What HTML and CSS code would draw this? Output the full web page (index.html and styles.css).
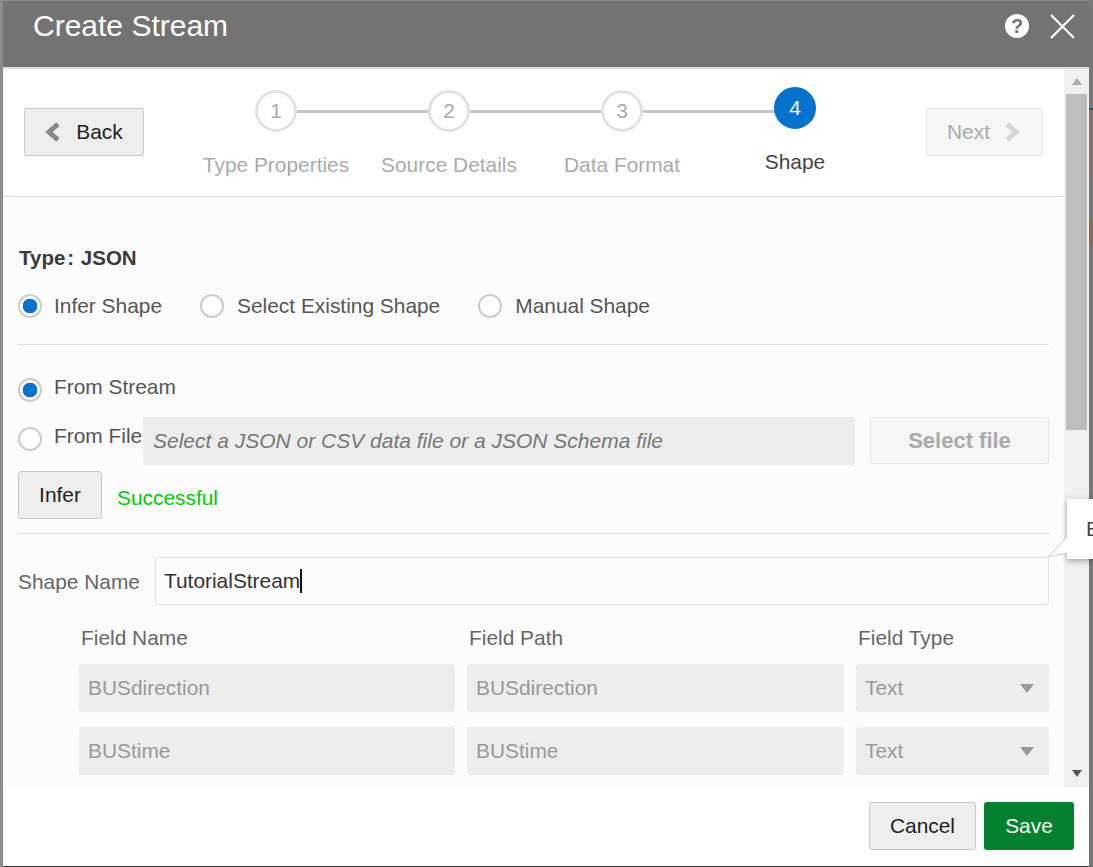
FILE: index.html
```html
<!DOCTYPE html>
<html lang="en">
<head>
  <meta charset="utf-8">
  <title>Create Stream</title>
  <link rel="stylesheet" href="styles.css">
</head>
<body>

<div class="modal">
  <header class="modal-head">
    <h1>Create Stream</h1>
    <svg class="help" width="26" height="26" viewBox="0 0 26 26"><circle cx="13" cy="13" r="12" fill="#fff"/><text x="13" y="19.5" text-anchor="middle" class="help-mark">?</text></svg>
    <svg class="close" width="26" height="26" viewBox="0 0 26 26"><path d="M2 2 L25 25 M25 2 L2 25" stroke="#fff" stroke-width="2.2" fill="none"/></svg>
  </header>

  <div class="modal-middle">
    <main class="content">
      <section class="wizard">
        <button class="btn btn-back">
          <svg width="16" height="20" viewBox="0 0 16 20"><path d="M13 2 L4 10 L13 18" stroke="#888" stroke-width="5" fill="none"/></svg>
          Back
        </button>
        <ol class="train">
          <li class="step"><span class="dot">1</span><span class="step-label">Type Properties</span></li>
          <li class="step"><span class="dot">2</span><span class="step-label">Source Details</span></li>
          <li class="step"><span class="dot">3</span><span class="step-label">Data Format</span></li>
          <li class="step current"><span class="dot">4</span><span class="step-label">Shape</span></li>
        </ol>
        <button class="btn btn-next">
          Next
          <svg width="16" height="20" viewBox="0 0 16 20"><path d="M3 2 L12 10 L3 18" stroke="#d6d6d6" stroke-width="5" fill="none"/></svg>
        </button>
      </section>

      <section class="form">
        <div class="type-line">Type<span class="colon">:</span> JSON</div>

        <div class="mode-row">
          <label class="choice"><input type="radio" name="mode" checked> Infer Shape</label>
          <label class="choice"><input type="radio" name="mode"> Select Existing Shape</label>
          <label class="choice"><input type="radio" name="mode"> Manual Shape</label>
        </div>

        <hr class="rule rule-a">

        <label class="choice source-stream"><input type="radio" name="src" checked> <span class="raised">From Stream</span></label>

        <div class="file-row">
          <label class="choice"><input type="radio" name="src"> <span class="raised">From File</span></label>
          <div class="box file-box">Select a JSON or CSV data file or a JSON Schema file</div>
          <button class="btn-select">Select file</button>
        </div>

        <div class="infer-row">
          <button class="btn btn-infer">Infer</button>
          <span class="ok">Successful</span>
        </div>

        <hr class="rule rule-b">

        <div class="name-row">
          <label class="name-label">Shape Name</label>
          <div class="box name-box">TutorialStream<span class="caret"></span></div>
        </div>

        <div class="fields">
          <div class="col-head">Field Name</div>
          <div class="col-head">Field Path</div>
          <div class="col-head">Field Type</div>

          <div class="box cell">BUSdirection</div>
          <div class="box cell">BUSdirection</div>
          <div class="box cell cell-select">Text<i class="arrow"></i></div>

          <div class="box cell">BUStime</div>
          <div class="box cell">BUStime</div>
          <div class="box cell cell-select">Text<i class="arrow"></i></div>
        </div>
      </section>
    </main>

    <div class="scrollbar">
      <i class="sb-up"></i>
      <div class="sb-thumb"></div>
      <i class="sb-down"></i>
    </div>
  </div>

  <footer class="modal-foot">
    <button class="btn btn-cancel">Cancel</button>
    <button class="btn-save">Save</button>
  </footer>

  <div class="tip">
    <svg class="tip-tail" width="22" height="24" viewBox="0 0 22 24"><path d="M20 1 L1 21 L20 17" fill="#fff" stroke="#d0d0d0"/><path d="M20 0 L21 0 L21 17 L20 17 Z" fill="#fff"/></svg>
    E
  </div>
</div>

</body>
</html>
```

FILE: styles.css
```css
:root { --line:#e4e4e4; --field:#ededed; --muted:#aaa; --blue:#0572ce; }
*{box-sizing:border-box}
html,body{height:100%}
body{margin:0;overflow:hidden;font:20.9px/24px "Liberation Sans",Arial,sans-serif;color:#555;
     background:
       linear-gradient(#777 0 108px,#0a5c96 108px 110px,#80706e 110px 178px,#777 178px 220px,#8a6a55 220px 245px,#777 245px) right top/4px 100% no-repeat,
       #8c8c8c}
button{font:inherit;cursor:pointer}

.modal{position:relative;margin:1px 4px 0 3px;height:866px;display:flex;flex-direction:column;
       background:#fff;border-bottom:1px solid #333}

/* title bar */
.modal-head{height:68px;flex:none;background:#737373;border-bottom:2px solid #ddd;display:flex;
            align-items:flex-start;padding:12px 14px 0 30px;color:#fff}
.modal-head h1{margin:0 auto 0 0;font-size:30px;font-weight:400;line-height:26px}
.help{margin:0 19px 0 0}
.close{margin:0}
.help-mark{font:bold 20px "Liberation Sans",Arial,sans-serif;fill:#737373}

.modal-middle{flex:1;display:flex;min-height:0}
.content{flex:1;min-width:0;background:#fcfcfc}

/* wizard train */
.wizard{height:128px;background:#fff;border-bottom:1px solid #d6dfe8;display:flex;align-items:flex-start;
        padding:0 21px}
.btn{height:48px;background:#eee;border:1px solid #c8c8c8;border-radius:3px;color:#222}
.btn-back{width:120px;margin-top:39px;display:flex;align-items:center;justify-content:center;gap:15px;padding:0}
.btn-next{width:117px;margin-top:39px;margin-left:auto;display:flex;align-items:center;justify-content:center;gap:14px;
          background:#f6f6f6;border-color:#e6e6e6;color:var(--muted);padding:0 2px 0 0}
.train{list-style:none;margin:21px 0 0 45.5px;padding:0;display:flex}
.step{position:relative;width:173px;display:flex;flex-direction:column;align-items:center;color:var(--muted)}
.step::after{content:"";position:absolute;left:50%;top:20px;width:100%;height:3px;background:#c8c8c8}
.step:last-child::after{display:none}
.dot{position:relative;z-index:1;width:42px;height:42px;border:3px solid #e2e2e2;border-radius:50%;background:#fff;
     display:grid;place-content:center}
.step-label{margin-top:21px;white-space:nowrap}
.current{margin-top:-3px;color:#444}
.current .dot{background:var(--blue);border-color:var(--blue);color:#fff}

/* form */
.form{padding:48px 15px 0}
.type-line{font-weight:700;color:#3a3a3a;line-height:26px;font-size:20.5px;padding-left:1px}
.colon{margin:0 1px 0 2px}
.mode-row{display:flex;margin-top:23px;gap:38px}
.choice{display:inline-flex;align-items:center;gap:12px;white-space:nowrap}
.mode-row .choice{gap:13px}
.mode-row .choice:first-child{gap:12px}
.choice input{appearance:none;margin:0;width:24px;height:24px;border:2px solid #ccc;border-radius:50%;background:#fff;flex:none}
.choice input:checked{background:radial-gradient(circle,var(--blue) 0 7px,#fff 7.6px)}
.raised{position:relative;top:-3px}
.rule{border:0;border-top:1px solid var(--line);margin:0}
.rule-a{margin-top:26px}
.source-stream{display:flex;margin-top:33px}
.file-row{display:flex;align-items:center;margin-top:15px;height:48px}
.file-row .choice{position:relative;top:-2px;width:125px}
.box{height:48px;border-radius:3px;background:var(--field);display:flex;align-items:center}
.file-box{width:712px;padding-left:10px;font-style:italic;font-size:21px;color:#777}
.btn-select{margin-left:15px;flex:1;height:47px;align-self:flex-start;background:#f5f6f8;border:1px solid #e3e6ea;border-radius:3px;
            font-size:22px;font-weight:700;color:var(--muted)}
.infer-row{display:flex;align-items:center;margin-top:6px}
.btn-infer{width:84px}
.ok{color:#0c0;margin-left:15px;position:relative;top:3px}
.rule-b{margin-top:14px}
.name-row{display:flex;align-items:center;margin-top:23px}
.name-label{width:137px;color:#666;position:relative;top:1px}
.name-box{flex:1;background:#fcfcfc;border:1px solid var(--line);padding-left:8px;color:#333}
.caret{width:2px;height:24px;background:#111}
.fields{display:grid;grid-template-columns:376px 1fr 193px;column-gap:12px;margin:21px 0 0 61px}
.col-head{color:#666;line-height:24px;padding:0 2px 14px;height:38px}
.cell{padding-left:9px;color:#999;margin-bottom:15px}
.cell-select{justify-content:space-between;padding-right:15px}
.arrow{width:0;height:0;border:7px solid transparent;border-bottom:0;border-top:9px solid #999}

/* fake scrollbar */
.scrollbar{width:25px;flex:none;background:#f0f0f0;display:flex;flex-direction:column;align-items:center;padding:0 2px}
.sb-up{margin-top:9px;border:5.5px solid transparent;border-top:0;border-bottom:7px solid #aaa}
.sb-thumb{width:21px;height:336px;margin-top:9px;background:#bdbdbd}
.sb-down{margin-top:auto;margin-bottom:10px;border:5.5px solid transparent;border-bottom:0;border-top:7px solid #555}

.modal-foot{height:79px;flex:none;display:flex;justify-content:flex-end;gap:8px;padding:15px 15px 0 0}
.btn-cancel{width:107px}
.btn-save{width:90px;height:48px;background:#04812f;border:0;border-radius:3px;color:#fff}

/* tooltip sticking out of the window */
.tip{position:absolute;left:1064px;top:498px;width:120px;height:60px;background:#fff;box-shadow:0 2px 6px #0005;
     display:flex;align-items:center;padding-left:19px;color:#444}
.tip-tail{position:absolute;left:-20px;top:37px}
```
